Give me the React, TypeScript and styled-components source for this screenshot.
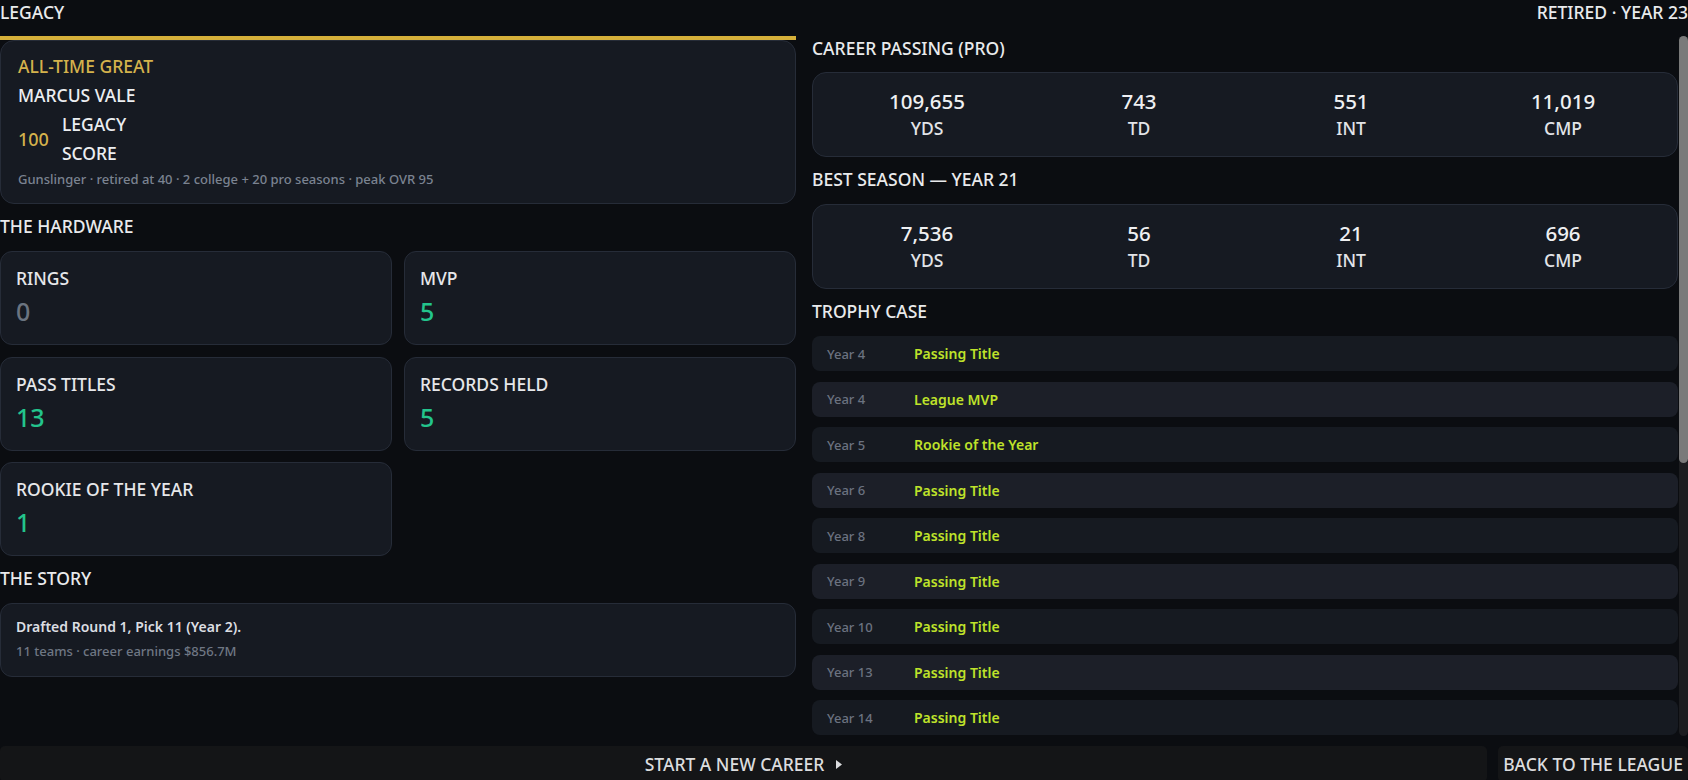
import React from "react";
import styled, { createGlobalStyle } from "styled-components";

const FONT = `"Noto Sans", "Open Sans", sans-serif`;

const GlobalStyle = createGlobalStyle`
  html, body {
    margin: 0;
    padding: 0;
    background: #0b0d11;
    overflow: hidden;
  }
  body {
    font-family: ${FONT};
    color: #e6e7ea;
  }
  * { box-sizing: border-box; }
`;

const Page = styled.div`
  height: 782px;
  width: 1688px;
  display: flex;
  flex-direction: column;
  background: #0b0d11;
`;

const Header = styled.header`
  height: 36px;
  flex: 0 0 36px;
  display: flex;
  justify-content: space-between;
  align-items: flex-start;
  font-size: 17.5px;
  font-weight: 500;
  line-height: 25px;
  color: #e9eaec;
`;

const ScrollArea = styled.div`
  flex: 0 0 700px;
  display: grid;
  grid-template-columns: 1fr 9px;
  column-gap: 1px;
  min-height: 0;
`;

const Main = styled.main`
  overflow: hidden;
  min-height: 0;
`;

const ScrollTrack = styled.div`
  display: flex;
  flex-direction: column;
  background: #1c1d20;
  border-radius: 5px;
`;

const ScrollThumb = styled.div`
  height: 427px;
  background: #7a7a7a;
  border-radius: 5px;
`;

const Columns = styled.div`
  display: grid;
  grid-template-columns: 796px 1fr;
  column-gap: 16px;
  align-items: start;
`;

const Column = styled.section`
  display: flex;
  flex-direction: column;
`;

const GoldBar = styled.div`
  height: 4px;
  background: #d6b03a;
`;

const Card = styled.div<{ $radius?: number }>`
  background: #161a22;
  border: 1px solid #262c38;
  border-radius: ${(p) => p.$radius ?? 12}px;
`;

const LegacyCard = styled(Card)`
  padding: 11px 17px 14px;
`;

const Tier = styled.div`
  font-size: 17.5px;
  font-weight: 500;
  line-height: 29px;
  color: #d4b24c;
`;

const Name = styled.div`
  font-size: 17.5px;
  font-weight: 500;
  line-height: 29px;
  color: #eceef1;
`;

const ScoreRow = styled.div`
  display: flex;
  align-items: center;
  gap: 13px;
`;

const Score = styled.div`
  font-size: 18px;
  font-weight: 500;
  color: #d4b24c;
`;

const ScoreLabel = styled.div`
  width: min-content;
  font-size: 17.5px;
  font-weight: 500;
  line-height: 29px;
  color: #eceef1;
`;

const Meta = styled.div`
  margin-top: 1px;
  font-size: 13px;
  line-height: 20px;
  font-weight: 500;
  color: #7b8391;
`;

const SectionTitle = styled.h2<{ $first?: boolean }>`
  margin: ${(p) => (p.$first ? "0 0 11px" : "8px 0 10px")};
  font-size: 17.5px;
  font-weight: 500;
  line-height: ${(p) => (p.$first ? "25px" : "29px")};
  color: #e9eaec;
`;

const HardwareGrid = styled.div`
  display: grid;
  grid-template-columns: 1fr 1fr;
  gap: 11.5px 12px;
`;

const HardwareCard = styled(Card)`
  padding: 12px 15px 15px;
`;

const HardwareLabel = styled.div`
  font-size: 17.5px;
  font-weight: 500;
  line-height: 29px;
  color: #e6e7ea;
`;

const HardwareValue = styled.div<{ $zero?: boolean }>`
  font-size: 25px;
  font-weight: 500;
  line-height: 36px;
  color: ${(p) => (p.$zero ? "#6b7480" : "#23c48c")};
`;

const StoryCard = styled(Card)`
  padding: 13px 15px 15px;
`;

const StoryLead = styled.div`
  font-size: 14px;
  font-weight: 600;
  line-height: 20px;
  color: #dcdee2;
`;

const StoryMeta = styled.div`
  margin-top: 4px;
  font-size: 13px;
  font-weight: 500;
  line-height: 20px;
  color: #6f7784;
`;

const StatsCard = styled(Card)`
  display: grid;
  grid-template-columns: repeat(4, 1fr);
  padding: 14px 8px;
`;

const StatCell = styled.div`
  display: flex;
  flex-direction: column;
  align-items: center;
`;

const StatValue = styled.div`
  font-size: 20.5px;
  font-weight: 500;
  line-height: 28px;
  color: #eff0f2;
`;

const StatLabel = styled.div`
  font-size: 17.5px;
  font-weight: 500;
  line-height: 27px;
  color: #e2e4e8;
`;

const TrophyList = styled.div`
  display: flex;
  flex-direction: column;
  gap: 10.5px;
  padding-bottom: 12px;
`;

const TrophyRow = styled.div<{ $alt?: boolean }>`
  height: 35px;
  display: flex;
  align-items: center;
  padding: 0 15px;
  border-radius: 8px;
  background: ${(p) => (p.$alt ? "#1c1f28" : "#161a21")};
`;

const TrophyYear = styled.span`
  width: 87px;
  flex: 0 0 87px;
  font-size: 13px;
  font-weight: 500;
  color: #6b7280;
`;

const TrophyName = styled.span`
  font-size: 14px;
  font-weight: 600;
  color: #bfe22a;
`;

const Footer = styled.footer`
  margin-top: 10px;
  flex: 0 0 36px;
  display: flex;
  gap: 11px;
`;

const FooterButton = styled.button<{ $grow?: boolean }>`
  flex: ${(p) => (p.$grow ? "1 1 auto" : "0 0 auto")};
  display: flex;
  align-items: center;
  justify-content: center;
  gap: 12px;
  padding: 0 5px;
  border: none;
  border-radius: 5px;
  background: #141517;
  font-family: ${FONT};
  font-size: 17.5px;
  font-weight: 500;
  color: #dcdddf;
  cursor: pointer;
`;

const Arrow = () => (
  <svg width="6" height="9" viewBox="0 0 6 9" aria-hidden="true">
    <polygon points="0,0 6,4.5 0,9" fill="#dcdddf" />
  </svg>
);

const hardware = [
  { label: "RINGS", value: 0 },
  { label: "MVP", value: 5 },
  { label: "PASS TITLES", value: 13 },
  { label: "RECORDS HELD", value: 5 },
  { label: "ROOKIE OF THE YEAR", value: 1 },
];

const career = [
  { v: "109,655", l: "YDS" },
  { v: "743", l: "TD" },
  { v: "551", l: "INT" },
  { v: "11,019", l: "CMP" },
];

const best = [
  { v: "7,536", l: "YDS" },
  { v: "56", l: "TD" },
  { v: "21", l: "INT" },
  { v: "696", l: "CMP" },
];

const trophies = [
  [4, "Passing Title"],
  [4, "League MVP"],
  [5, "Rookie of the Year"],
  [6, "Passing Title"],
  [8, "Passing Title"],
  [9, "Passing Title"],
  [10, "Passing Title"],
  [13, "Passing Title"],
  [14, "Passing Title"],
] as const;

const StatBlock = ({ data }: { data: { v: string; l: string }[] }) => (
  <StatsCard $radius={14}>
    {data.map((s) => (
      <StatCell key={s.l}>
        <StatValue>{s.v}</StatValue>
        <StatLabel>{s.l}</StatLabel>
      </StatCell>
    ))}
  </StatsCard>
);

export default function App() {
  return (
    <Page>
      <GlobalStyle />
      <Header>
        <span>LEGACY</span>
        <span>RETIRED · YEAR 23</span>
      </Header>
      <ScrollArea>
        <Main>
          <Columns>
            <Column>
              <GoldBar />
              <LegacyCard $radius={14}>
                <Tier>ALL-TIME GREAT</Tier>
                <Name>MARCUS VALE</Name>
                <ScoreRow>
                  <Score>100</Score>
                  <ScoreLabel>LEGACY SCORE</ScoreLabel>
                </ScoreRow>
                <Meta>
                  Gunslinger · retired at 40 · 2 college + 20 pro seasons · peak OVR 95
                </Meta>
              </LegacyCard>

              <SectionTitle>THE HARDWARE</SectionTitle>
              <HardwareGrid>
                {hardware.map((h) => (
                  <HardwareCard key={h.label}>
                    <HardwareLabel>{h.label}</HardwareLabel>
                    <HardwareValue $zero={h.value === 0}>{h.value}</HardwareValue>
                  </HardwareCard>
                ))}
              </HardwareGrid>

              <SectionTitle>THE STORY</SectionTitle>
              <StoryCard>
                <StoryLead>Drafted Round 1, Pick 11 (Year 2).</StoryLead>
                <StoryMeta>11 teams · career earnings $856.7M</StoryMeta>
              </StoryCard>
            </Column>

            <Column>
              <SectionTitle $first>CAREER PASSING (PRO)</SectionTitle>
              <StatBlock data={career} />
              <SectionTitle>BEST SEASON — YEAR 21</SectionTitle>
              <StatBlock data={best} />
              <SectionTitle>TROPHY CASE</SectionTitle>
              <TrophyList>
                {trophies.map(([y, t], i) => (
                  <TrophyRow key={i} $alt={i % 2 === 1}>
                    <TrophyYear>Year {y}</TrophyYear>
                    <TrophyName>{t}</TrophyName>
                  </TrophyRow>
                ))}
              </TrophyList>
            </Column>
          </Columns>
        </Main>
        <ScrollTrack>
          <ScrollThumb />
        </ScrollTrack>
      </ScrollArea>
      <Footer>
        <FooterButton $grow>
          START A NEW CAREER
          <Arrow />
        </FooterButton>
        <FooterButton>BACK TO THE LEAGUE</FooterButton>
      </Footer>
    </Page>
  );
}
